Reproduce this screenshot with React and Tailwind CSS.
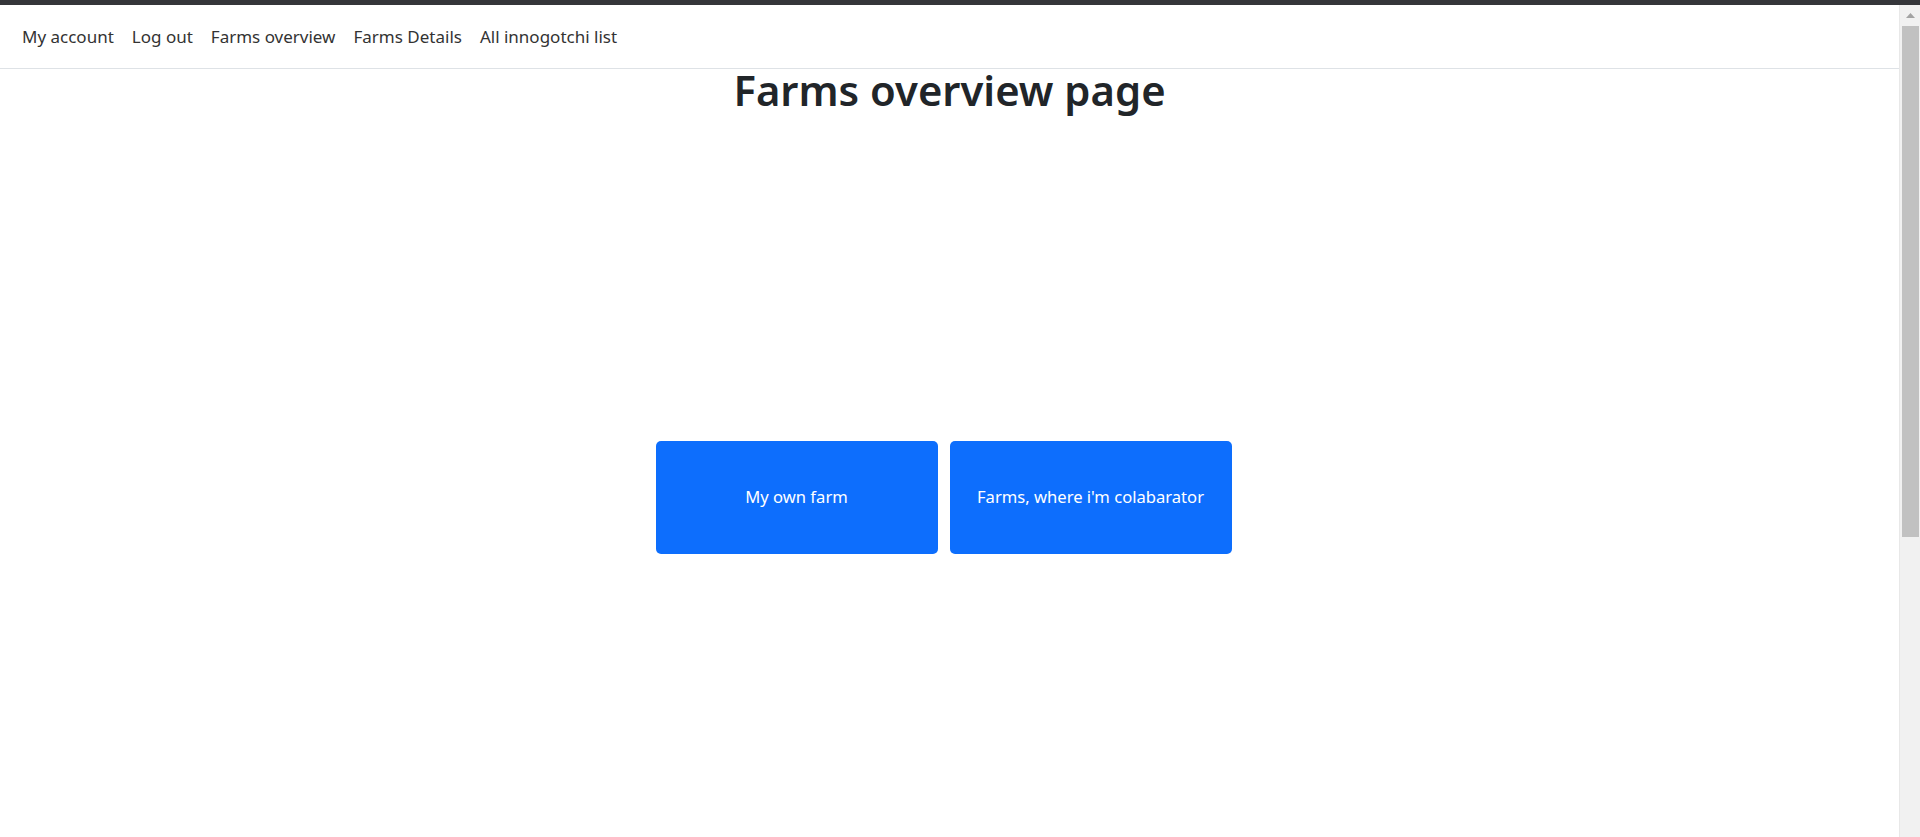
export default function App() {
  const font = { fontFamily: '"Noto Sans", "Open Sans", Arial, sans-serif' };
  return (
    <div className="h-[837px] w-full flex flex-col bg-white overflow-hidden" style={font}>
      <div className="h-[5px] w-full bg-[#35363a] shrink-0" />
      <div className="flex flex-1 min-h-0">
        <main className="flex-1 flex flex-col">
          <nav className="h-[64px] border-b border-[#dee2e6] flex items-center pl-[13px] shrink-0">
            {["My account", "Log out", "Farms overview", "Farms Details", "All innogotchi list"].map((t) => (
              <a key={t} className="px-[9px] text-[17px] text-[#333] cursor-pointer">{t}</a>
            ))}
          </nav>
          <h1 className="text-center text-[41.8px] leading-[48px] font-semibold text-[#212529] -mt-[3px]">Farms overview page</h1>
          <div className="flex justify-center gap-[12px] pr-[12px] mt-[327px]">
            <button className="w-[282px] h-[113px] rounded-[5px] bg-[#0d6efd] text-white text-[16.6px]">My own farm</button>
            <button className="w-[282px] h-[113px] rounded-[5px] bg-[#0d6efd] text-white text-[16.6px]">Farms, where i'm colabarator</button>
          </div>
        </main>
        <aside className="w-[21px] shrink-0 bg-[#f1f1f1] border-l border-[#e8e8e8] flex flex-col items-center">
          <div className="h-[21px] flex items-center justify-center">
            <svg width="9" height="5" viewBox="0 0 9 5"><polygon points="4.5,0 9,5 0,5" fill="#a3a3a3" /></svg>
          </div>
          <div className="w-[17px] h-[511px] bg-[#c1c1c1]" />
        </aside>
      </div>
    </div>
  );
}
